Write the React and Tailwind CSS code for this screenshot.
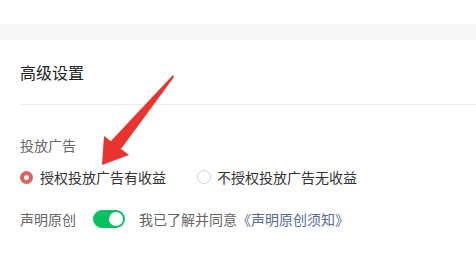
export default function App() {
  return (
    <div
      className="relative h-[254px] w-[476px] overflow-hidden bg-white"
      style={{ fontFamily: '"Noto Sans CJK SC", "Noto Sans", sans-serif' }}
    >
      <div className="h-6" />
      <div className="h-4 bg-[#f7f7f7]" />
      <div className="pl-5">
        <div className="flex h-[65px] items-center border-b border-[#ececec] pb-[1px] text-[16px] text-[#222]">
          高级设置
        </div>
        <div className="mt-[30px] text-[14px] leading-[20px] text-[#666]">投放广告</div>
        <div className="mt-[12px] flex items-center text-[14px] leading-[20px] text-[#333]">
          <span className="box-border h-[13px] w-[13px] rounded-full border-[4px] border-[#e0605e] bg-white" />
          <span className="ml-[7px]">授权投放广告有收益</span>
          <span className="ml-[31px] box-border h-[14px] w-[14px] rounded-full border border-[#d4d4d4] bg-white" />
          <span className="ml-[6px]">不授权投放广告无收益</span>
        </div>
        <div className="mt-[22px] flex items-center text-[14px] leading-[20px]">
          <span className="text-[#666]">声明原创</span>
          <span className="ml-[17px] flex h-[18px] w-[32px] items-center justify-end rounded-full bg-[#07c160] px-[2px]">
            <span className="h-[14px] w-[14px] rounded-full bg-white" />
          </span>
          <span className="ml-[14px] text-[#666]">我已了解并同意</span>
          <span className="text-[#576b95]">《声明原创须知》</span>
        </div>
      </div>
      <svg className="absolute left-0 top-0" width="476" height="254" viewBox="0 0 476 254">
        <polygon points="173,75 174,77 121,149 110,142" fill="#e8332f" />
        <polygon points="102,165 104,136 129,155" fill="#e8332f" />
      </svg>
    </div>
  );
}
